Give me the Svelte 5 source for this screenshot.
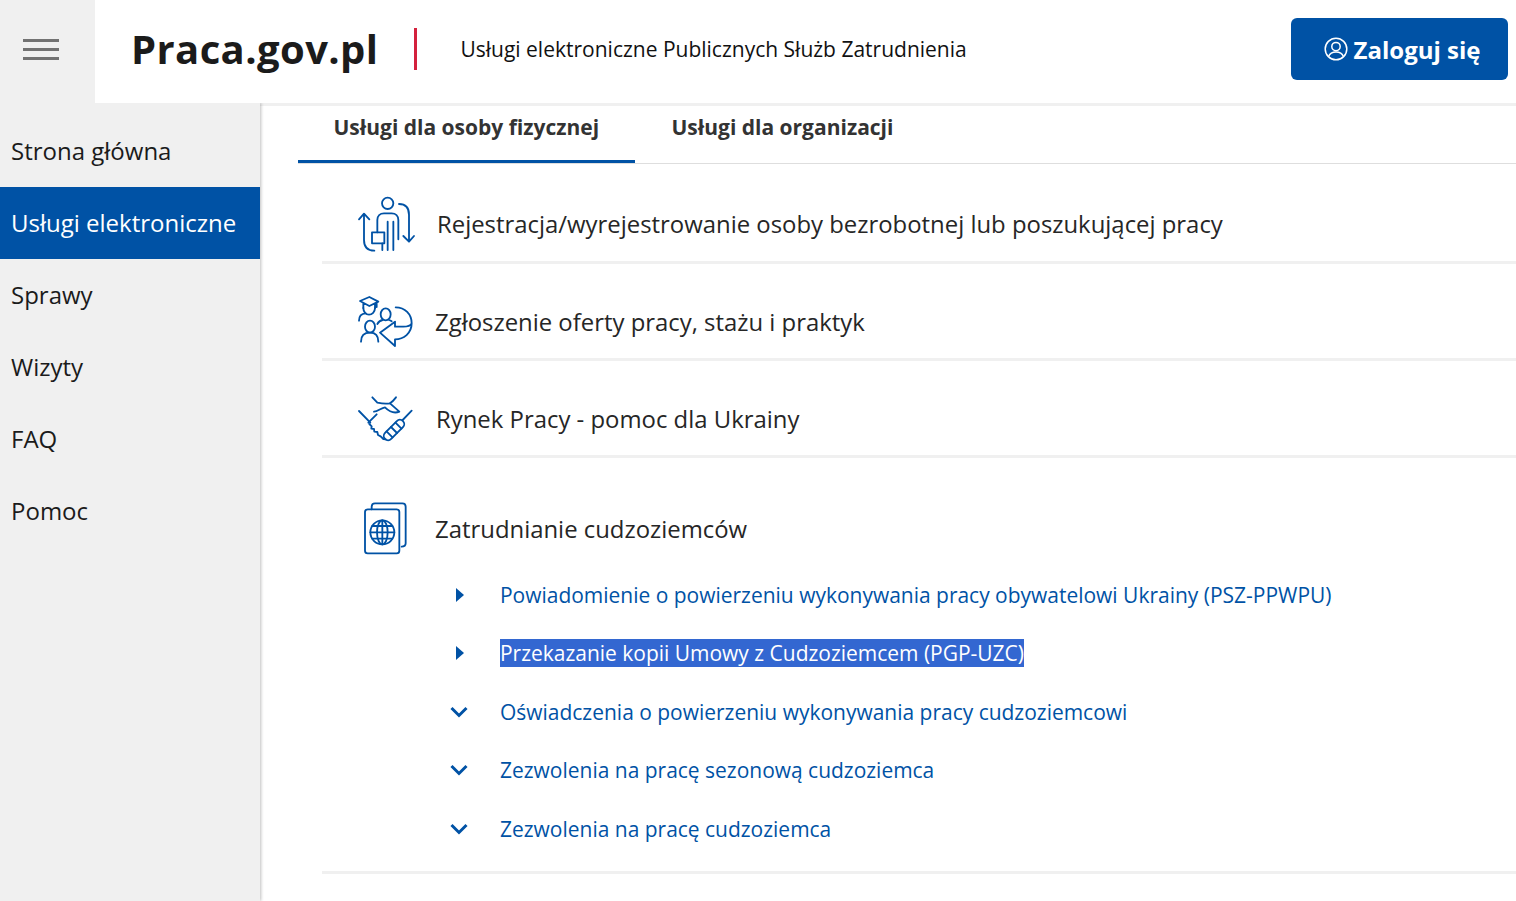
<script lang="ts">
    const nav = ['Strona główna', 'Usługi elektroniczne', 'Sprawy', 'Wizyty', 'FAQ', 'Pomoc'];

    const links = [
        { label: 'Powiadomienie o powierzeniu wykonywania pracy obywatelowi Ukrainy (PSZ-PPWPU)', open: false },
        { label: 'Przekazanie kopii Umowy z Cudzoziemcem (PGP-UZC)', open: false, selected: true },
        { label: 'Oświadczenia o powierzeniu wykonywania pracy cudzoziemcowi', open: true },
        { label: 'Zezwolenia na pracę sezonową cudzoziemca', open: true },
        { label: 'Zezwolenia na pracę cudzoziemca', open: true }
    ];
</script>

<header class="header">
    <button class="burger" aria-label="Menu">
        <span></span><span></span><span></span>
    </button>
    <div class="brand">Praca.gov.pl</div>
    <div class="tagline">Usługi elektroniczne Publicznych Służb Zatrudnienia</div>
    <button class="login">
        <svg width="24" height="24" viewBox="0 0 24 24" fill="none" stroke="currentColor" stroke-width="1.5">
            <circle cx="12" cy="12" r="10.8" />
            <circle cx="12" cy="9.6" r="4.2" />
            <path d="M4.6 19.6c1.2-3.2 3.6-4.6 7.4-4.6s6.2 1.4 7.4 4.6" />
        </svg>
        Zaloguj się
    </button>
</header>

<div class="body">
    <nav class="sidebar">
        {#each nav as item, i}
            <div class="nav-item" class:active={i === 1}>{item}</div>
        {/each}
    </nav>

    <main class="main">
        <div class="tabs">
            <div class="tab active">Usługi dla osoby fizycznej</div>
            <div class="tab">Usługi dla organizacji</div>
        </div>

        <section class="row first">
            <svg class="icon" width="60" height="60" viewBox="48 42 180 180">
                <circle cx="143" cy="70" r="17" />
                <path d="M112 157v-37c0-12 8-20 20-20h23c12 0 20 8 20 20v58M127 190v20M143 125v85M160 125v85" />
                <rect x="96" y="157" width="37" height="33" />
                <path d="M103 212c-20 0-31-12-31-32v-78M57 118l15-17 16 17" />
                <path d="M177 72c20 0 30 12 30 32v80M190 168l17 17 15-17" />
            </svg>
            <span class="row-title">Rejestracja/wyrejestrowanie osoby bezrobotnej lub poszukującej pracy</span>
        </section>

        <section class="row second">
            <svg class="icon" width="60" height="60" viewBox="48 36 180 180">
                <path d="M60 63l28-12 27 14-27 13zM70 70v14M105 70v14M110 66v15" />
                <path d="M70 84c0 12 8 20 17 20s18-8 18-20" />
                <path d="M57 122c0-13 8-21 20-22" />
                <ellipse cx="137" cy="103" rx="15" ry="18" />
                <path d="M112 132c4-8 10-11 16-12M147 120c3 1 5 2 8 4" />
                <ellipse cx="90" cy="140" rx="15" ry="18" />
                <path d="M63 185c0-18 10-27 27-27s25 9 25 27" />
                <path d="M167 82c28 0 48 20 48 48 0 30-24 48-50 48v20l-45-40 45-33v15h25c12 0 22-4 25-10" />
            </svg>
            <span class="row-title">Zgłoszenie oferty pracy, stażu i praktyk</span>
        </section>

        <section class="row third">
            <svg class="icon" width="60" height="60" viewBox="48 27 180 180">
                <path d="M57 93l34 35M215 92l-27 28" />
                <path d="M97 52l15 16c14 3 28 4 38 2 6-4 12-10 18-18" />
                <path d="M150 70l28 25c-15 6-30 0-43-13-12 2-22 13-33 13" />
                <path d="M85 128l25-25" />
                <path d="M88 132l7 7-1 7 8 1 1 8 9 1 2 9 8 4 8 8 7 1" />
                <rect x="124" y="137" width="76" height="26" rx="13" transform="rotate(-45 162 150)" />
                <path d="M153 141l18 18M166.400 127.600l18 18M139.600 154.400l18 18" />
            </svg>
            <span class="row-title">Rynek Pracy - pomoc dla Ukrainy</span>
        </section>

        <section class="row fourth">
            <div class="row-head">
                <svg class="icon" width="60" height="60" viewBox="48 27 180 180">
                    <path d="M95 58v-8q0-10 10-10h82q10 0 10 10v110q0 10-12 10" />
                    <rect x="75" y="58" width="103" height="132" rx="8" />
                    <circle cx="127" cy="127" r="36" />
                    <ellipse cx="127" cy="127" rx="16" ry="36" />
                    <path d="M127 91v72M91 127h72M97 108h60M97 146h60" />
                </svg>
                <span class="row-title">Zatrudnianie cudzoziemców</span>
            </div>
            <ul class="links">
                {#each links as link}
                    <li class="link">
                        <span class="marker">
                            {#if link.open}
                                <svg class="chevron" width="20" height="12" viewBox="0 0 20 12"><path d="M2.500 2 10 9.500 17.500 2" /></svg>
                            {:else}
                                <svg class="solid" width="8" height="14" viewBox="0 0 8 14"><path d="M0 0l8 7-8 7z" /></svg>
                            {/if}
                        </span>
                        <span class="link-text" class:selected={link.selected}>{link.label}</span>
                    </li>
                {/each}
            </ul>
        </section>
    </main>
</div>

<style>
    :global(body) {
        font-family: 'Open Sans', sans-serif;
        color: #1b1b1b;
        background: #fff;
        overflow: hidden;
    }

    .header {
        display: flex;
        align-items: center;
        height: 103px;
    }

    .burger {
        display: flex;
        flex-direction: column;
        justify-content: center;
        gap: 6px;
        align-self: stretch;
        width: 95px;
        padding: 0 0 4px 23px;
        box-sizing: border-box;
        background: #f0f0f0;
        border: 0;
    }

    .burger span {
        width: 36px;
        height: 3px;
        background: #727272;
    }

    .brand {
        margin: 0 0 7px 36px;
        padding-right: 36px;
        font-size: 40px;
        font-weight: 700;
        letter-spacing: 0.4px;
        color: #1b1b1b;
    }

    .tagline {
        display: flex;
        align-items: center;
        height: 42px;
        margin-bottom: 5px;
        padding-left: 43px;
        border-left: 3px solid #d4213d;
        font-size: 21px;
        color: #111;
    }

    .login {
        display: flex;
        align-items: center;
        justify-content: center;
        gap: 6px;
        width: 217px;
        height: 62px;
        margin: 0 8px 5px auto;
        padding: 0 0 0 5px;
        background: #0052a5;
        border: 0;
        border-radius: 6px;
        font-family: inherit;
        font-size: 24px;
        font-weight: 700;
        color: #fff;
    }

    .body {
        display: flex;
        height: 798px;
        background: #f0f0f0;
    }

    .sidebar {
        position: relative;
        width: 260px;
        flex-shrink: 0;
        padding-top: 12px;
        box-shadow: 1px 0 3px rgba(0, 0, 0, 0.25);
        clip-path: inset(0 -6px 0 0);
    }

    .nav-item {
        display: flex;
        align-items: center;
        height: 72px;
        padding: 0 0 2px 11px;
        box-sizing: border-box;
        font-size: 24px;
    }

    .nav-item.active {
        background: #0052a5;
        color: #fff;
    }

    .main {
        flex: 1;
        margin-top: 3px;
        padding-left: 38px;
        background: #fff;
    }

    .tabs {
        display: flex;
        height: 58px;
        box-sizing: border-box;
        border-bottom: 1px solid #dedede;
    }

    .tab {
        padding: 7px 36px 0 35.5px;
        font-size: 21px;
        font-weight: 700;
        line-height: 29px;
        color: #333;
    }

    .tab.active {
        width: 337px;
        height: 57px;
        margin-right: 1px;
        padding-right: 0;
        box-sizing: border-box;
        border-bottom: 3px solid #0052a5;
    }

    .row {
        display: flex;
        align-items: center;
        margin-left: 24px;
        padding: 22px 0 0 34px;
        box-sizing: border-box;
        border-bottom: 3px solid #f0f0f0;
    }

    .first { height: 100px; padding-top: 23px; gap: 21px; }
    .second { height: 97px; gap: 19px; }
    .third { height: 97px; gap: 20px; }

    .fourth {
        display: block;
        height: 416px;
        padding-top: 41px;
    }

    .row-head {
        display: flex;
        align-items: center;
        gap: 19px;
    }

    .row-title {
        padding-bottom: 2px;
        font-size: 23.9px;
        color: #262626;
    }

    .icon {
        flex-shrink: 0;
        fill: none;
        stroke: #0052a5;
        stroke-width: 5.5;
        stroke-linecap: round;
        stroke-linejoin: round;
    }

    .links {
        list-style: none;
        margin: 0;
        padding: 6.6px 0 0 93px;
    }

    .link {
        display: flex;
        align-items: center;
        height: 58.5px;
        font-size: 20.97px;
        color: #0052a5;
    }

    .marker {
        display: flex;
        justify-content: center;
        width: 21px;
        margin-right: 30px;
    }

    .marker svg {
        fill: none;
        stroke: #0052a5;
        stroke-width: 3;
    }

    .marker svg.chevron {
        margin-left: -1px;
    }

    .marker svg.solid {
        fill: #0052a5;
        stroke: none;
    }

    .link-text.selected {
        background: #3367d1;
        color: #fff;
    }
</style>
